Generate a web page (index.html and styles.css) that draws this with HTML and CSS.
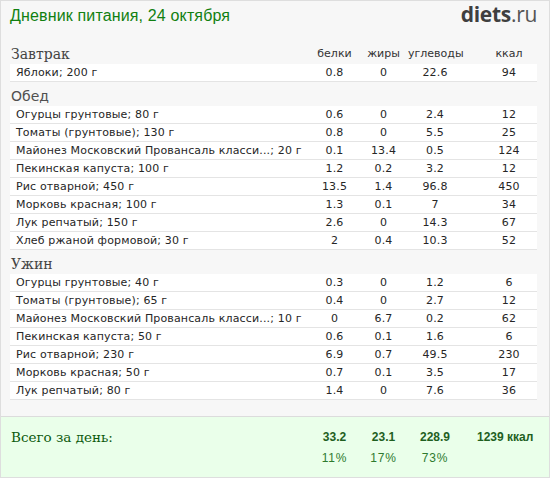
FILE: index.html
```html
<!DOCTYPE html>
<html lang="ru">
<head>
<meta charset="utf-8">
<title>Дневник питания</title>
<link rel="stylesheet" href="styles.css">
</head>
<body>
<div class="page">
  <header class="top">
    <h1 class="title">Дневник питания, 24 октября</h1>
    <div class="logo"><b>diets</b>.ru</div>
  </header>
  <main class="diary">
    <section class="meal">
      <div class="grid meal-head">
        <h2 class="meal-name serif">Завтрак</h2>
        <span class="label">белки</span><span class="label">жиры</span><span class="label">углеводы</span><span class="label kcal">ккал</span>
      </div>
      <div class="grid item"><span class="name">Яблоки; 200 г</span><span>0.8</span><span>0</span><span>22.6</span><span class="kcal">94</span></div>
    </section>
    <section class="meal">
      <div class="grid meal-head"><h2 class="meal-name sans">Обед</h2></div>
      <div class="grid item"><span class="name">Огурцы грунтовые; 80 г</span><span>0.6</span><span>0</span><span>2.4</span><span class="kcal">12</span></div>
      <div class="grid item"><span class="name">Томаты (грунтовые); 130 г</span><span>0.8</span><span>0</span><span>5.5</span><span class="kcal">25</span></div>
      <div class="grid item"><span class="name">Майонез Московский Провансаль класси...; 20 г</span><span>0.1</span><span>13.4</span><span>0.5</span><span class="kcal">124</span></div>
      <div class="grid item"><span class="name">Пекинская капуста; 100 г</span><span>1.2</span><span>0.2</span><span>3.2</span><span class="kcal">12</span></div>
      <div class="grid item"><span class="name">Рис отварной; 450 г</span><span>13.5</span><span>1.4</span><span>96.8</span><span class="kcal">450</span></div>
      <div class="grid item"><span class="name">Морковь красная; 100 г</span><span>1.3</span><span>0.1</span><span>7</span><span class="kcal">34</span></div>
      <div class="grid item"><span class="name">Лук репчатый; 150 г</span><span>2.6</span><span>0</span><span>14.3</span><span class="kcal">67</span></div>
      <div class="grid item"><span class="name">Хлеб ржаной формовой; 30 г</span><span>2</span><span>0.4</span><span>10.3</span><span class="kcal">52</span></div>
    </section>
    <section class="meal">
      <div class="grid meal-head"><h2 class="meal-name serif">Ужин</h2></div>
      <div class="grid item"><span class="name">Огурцы грунтовые; 40 г</span><span>0.3</span><span>0</span><span>1.2</span><span class="kcal">6</span></div>
      <div class="grid item"><span class="name">Томаты (грунтовые); 65 г</span><span>0.4</span><span>0</span><span>2.7</span><span class="kcal">12</span></div>
      <div class="grid item"><span class="name">Майонез Московский Провансаль класси...; 10 г</span><span>0</span><span>6.7</span><span>0.2</span><span class="kcal">62</span></div>
      <div class="grid item"><span class="name">Пекинская капуста; 50 г</span><span>0.6</span><span>0.1</span><span>1.6</span><span class="kcal">6</span></div>
      <div class="grid item"><span class="name">Рис отварной; 230 г</span><span>6.9</span><span>0.7</span><span>49.5</span><span class="kcal">230</span></div>
      <div class="grid item"><span class="name">Морковь красная; 50 г</span><span>0.7</span><span>0.1</span><span>3.5</span><span class="kcal">17</span></div>
      <div class="grid item"><span class="name">Лук репчатый; 80 г</span><span>1.4</span><span>0</span><span>7.6</span><span class="kcal">36</span></div>
    </section>
  </main>
  <footer class="total">
    <div class="grid total-row">
      <span class="total-title">Всего за день:</span>
      <b>33.2</b><b>23.1</b><b>228.9</b><b class="kcal-total">1239 ккал</b>
    </div>
    <div class="grid pct-row">
      <span></span><span>11%</span><span>17%</span><span>73%</span><span></span>
    </div>
  </footer>
</div>
</body>
</html>
```

FILE: styles.css
```css
html, body {
  margin: 0;
  padding: 0;
  background: #ffffff;
}

.page {
  width: 550px;
  height: 478px;
  box-sizing: border-box;
  border: 1px solid #dedede;
  background: #f7f7f7;
  display: flex;
  flex-direction: column;
  font-family: "DejaVu Sans", Verdana, sans-serif;
}

.top {
  height: 39px;
  display: flex;
  justify-content: space-between;
  align-items: flex-start;
  padding: 0 12px 0 9px;
}

.title {
  margin: 0;
  padding-top: 5px;
  font-family: "Liberation Sans", Arial, sans-serif;
  font-weight: normal;
  font-size: 16px;
  line-height: 20px;
  letter-spacing: 0.15px;
  color: #118011;
}

.logo {
  padding-top: 1px;
  font-family: "Open Sans", "Liberation Sans", sans-serif;
  font-size: 21px;
  line-height: 24px;
  color: #555;
  letter-spacing: -0.3px;
}

.logo b {
  font-weight: 700;
  color: #3f3f3f;
}

.diary {
  flex: 1;
  padding: 0 12px 0 9px;
}

.grid {
  display: grid;
  grid-template-columns: 1fr 49px 49px 54px 75px;
  text-align: center;
}

.meal-head {
  height: 24px;
  align-items: end;
}

.meal-name {
  margin: 0;
  padding: 0 0 0 1px;
  text-align: left;
  font-weight: normal;
  line-height: 20px;
  color: #444;
}

.serif {
  font-family: "DejaVu Serif", Georgia, serif;
  font-size: 14px;
}

.sans {
  font-family: "DejaVu Sans", Verdana, sans-serif;
  font-size: 14px;
  color: #505050;
}

.label {
  font-size: 11px;
  line-height: 14px;
  padding-bottom: 3px;
  color: #333;
}

.kcal {
  padding-left: 19px;
}

.item {
  height: 17px;
  line-height: 17px;
  background: #fff;
  border-bottom: 1px solid #e4e4e4;
  font-size: 11px;
  color: #262626;
  letter-spacing: 0.15px;
}

.name {
  text-align: left;
  padding-left: 6px;
  white-space: nowrap;
}

.total {
  height: 61px;
  box-sizing: border-box;
  border-top: 1px solid #dcdcdc;
  background: #eaffea;
  padding: 11px 12px 0 9px;
}

.total-row {
  line-height: 18px;
  align-items: center;
}

.total-title {
  text-align: left;
  padding-left: 1px;
  font-family: "DejaVu Serif", Georgia, serif;
  font-size: 13.5px;
  color: #0d5a0d;
}

.total-row b {
  font-family: "Liberation Sans", Arial, sans-serif;
  font-size: 12px;
  color: #1f5f1f;
}

.kcal-total {
  padding-left: 15px;
  text-align: left;
  white-space: nowrap;
}

.pct-row {
  margin-top: 3px;
  line-height: 18px;
  font-family: "Liberation Sans", Arial, sans-serif;
  font-size: 12px;
  letter-spacing: 0.8px;
  color: #2e7a2e;
}
```
